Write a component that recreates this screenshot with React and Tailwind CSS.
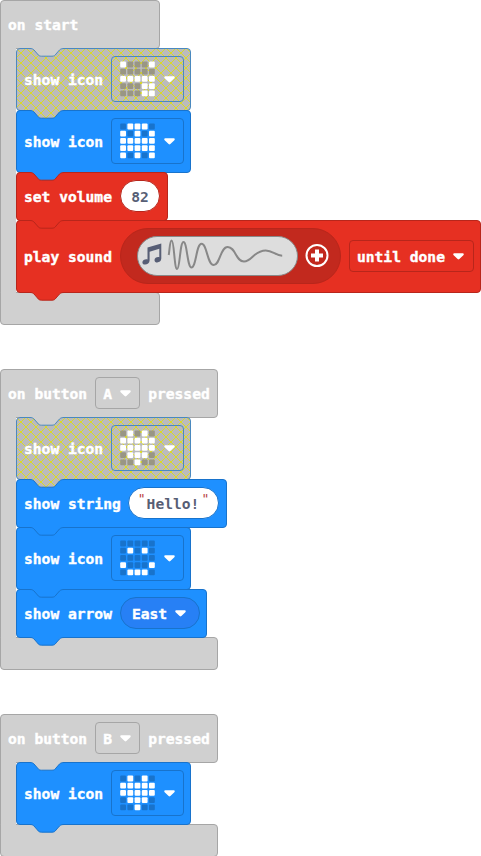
import React from 'react';

const HEART = ['01010', '11111', '11111', '01110', '00100'];
const GHOST = ['01110', '10101', '11111', '11111', '10101'];
const FACE = ['00000', '01010', '00000', '10001', '01110'];
const CHAIR = ['10001', '00000', '11111', '00011', '00011'];

const THEMES = {
  blue: { box: 'bg-[#1e90ff] border-[#1873cc]', field: 'border-[#1873cc]', fill: '#1e90ff', stroke: '#1873cc' },
  red: { box: 'bg-[#e63022] border-[#b8261b]', field: 'border-[#b8261b]', fill: '#e63022', stroke: '#b8261b' },
  disabled: { box: 'bg-[#bbbbbb] border-[#4a89bf]', field: 'border-[#4a89bf]', fill: '#bbbbbb', stroke: '#4a89bf' },
};

function Arrow() {
  return (
    <svg className="block shrink-0" width="11" height="7" viewBox="0 0 10 7" preserveAspectRatio="none">
      <path d="M0.2 1.1Q0.3 0.3 1.2 0.3H8.8Q9.7 0.3 9.8 1.1Q9.9 1.7 9.4 2.2L5.8 6.1Q5 6.8 4.2 6.1L0.6 2.2Q0.1 1.7 0.2 1.1Z" fill="#fff" />
    </svg>
  );
}

function Hatch({ id }) {
  return (
    <svg className="absolute -left-px -top-px h-[62px] w-[175px] rounded">
      <defs>
        <pattern id={id} patternUnits="userSpaceOnUse" width="10" height="10">
          <path d="M0 0L10 10M10 0L0 10" stroke="#d9d928" strokeWidth="1" />
        </pattern>
      </defs>
      <rect x="1" y="1" width="173" height="61" rx="3" fill={`url(#${id})`} />
    </svg>
  );
}

/* Puzzle tab: hangs from the block above and covers the top edge of the one below. */
function Tab({ fill, stroke, hatch }) {
  const d = 'M12 0.5H14C16 0.5 17 1 18 2L21.5 6C22.5 7.5 23.5 8.2 25.5 8.2H36C38 8.2 39 7.5 40 6L43.5 2C44.5 1 46 0.5 48 0.5H50';
  return (
    <svg className="pointer-events-none absolute left-0 z-10 h-[10px] w-[60px]" viewBox="0 0 60 10">
      {hatch && (
        <defs>
          <pattern id={hatch} patternUnits="userSpaceOnUse" width="10" height="10" y="-2">
            <path d="M0 0L10 10M10 0L0 10" stroke="#d9d928" strokeWidth="1" />
          </pattern>
        </defs>
      )}
      <path d={d + 'V0H12Z'} fill={fill} />
      {hatch && <path d={d + 'V0H12Z'} fill={`url(#${hatch})`} />}
      <path d={d} fill="none" stroke={stroke} />
    </svg>
  );
}

function Leds({ rows, dim }) {
  return (
    <svg className="block shrink-0" width="36" height="36" viewBox="0 0 36 36">
      {rows.map((row, y) =>
        [...row].map((c, x) => (
          <rect key={`${x}-${y}`} x={x * 7.2 + 0.2} y={y * 7.2 + 0.6} width="5.8" height="5.8" rx="1" fill={c === '1' ? '#fff' : dim ? '#999684' : '#1873cc'} />
        ))
      )}
    </svg>
  );
}

function Label({ children }) {
  return <span className="pt-0.5 leading-4 whitespace-pre [-webkit-text-stroke:0.4px_currentColor]">{children}</span>;
}

function PlainLabel({ children }) {
  return <span className="pt-0.5 leading-4 whitespace-pre">{children}</span>;
}

function Block({ theme, size, first, tabStroke, id, children }) {
  const t = THEMES[theme];
  return (
    <div className={`relative flex items-center gap-2 rounded border pb-px pl-[7px] ${t.box} ${size} -mb-px`}>
      {theme === 'disabled' && <Hatch id={`${id}-hatch`} />}
      {first && (
        <div className="absolute -left-px -top-px">
          <Tab fill="#d0d0d0" stroke={t.stroke} />
        </div>
      )}
      <div className="relative flex items-center gap-2">{children}</div>
      <div className="absolute -bottom-px -left-px h-px">
        <Tab fill={t.fill} stroke={tabStroke || t.stroke} hatch={theme === 'disabled' ? `${id}-tab` : null} />
      </div>
    </div>
  );
}

function IconBlock({ rows, theme = 'blue', ...rest }) {
  return (
    <Block theme={theme} size="h-[63px] w-[175px]" {...rest}>
      <Label>show icon</Label>
      <div className={`flex h-[46px] w-[73px] items-center gap-2 rounded border pl-2 ${THEMES[theme].field}`}>
        <Leds rows={rows} dim={theme === 'disabled'} />
        <Arrow />
      </div>
    </Block>
  );
}

function Hat({ header, width, children }) {
  return (
    <div className={`flex flex-col ${width}`}>
      <div className="flex h-[49px] items-center gap-2 rounded rounded-bl-none border border-[#a6a6a6] bg-[#d0d0d0] pb-px pl-[7px]">{header}</div>
      <div className="flex">
        <div className="relative -mb-px -mt-px w-4 shrink-0 border-l border-[#a6a6a6] bg-[#d0d0d0]" />
        <div className="relative z-10 -mt-px flex flex-col items-start">{children}</div>
      </div>
      <div className="relative h-[33px] rounded rounded-tl-none border border-[#a6a6a6] bg-[#d0d0d0]">
        <div className="-mt-px h-px w-[15px] bg-[#d0d0d0]" />
      </div>
    </div>
  );
}

function ButtonHeader({ name }) {
  return (
    <>
      <Label>on button</Label>
      <div className="flex h-8 w-[45px] shrink-0 items-center gap-2 rounded border border-[#a6a6a6] pl-[7px]">
        <Label>{name}</Label>
        <Arrow />
      </div>
      <Label>pressed</Label>
    </>
  );
}

function SoundWave() {
  return (
    <svg className="block shrink-0" width="158" height="40" viewBox="1.3 1 158 40">
      <g transform="translate(-0.4 0.4)">
        <path d="M11.2 12.2L25 8.2V23.2C25 27.6 18.4 28.4 18.2 24.8C18.1 22.5 20.8 21.3 23 21.8V13.4L13.3 16.4V25.2C13.3 29.6 6.3 30.6 6.1 27C6 24.7 8.9 23.5 11.2 24Z" fill="#575e75" />
      </g>
      <path d="M32 20C33 15 33 5.5 35 5.5C37.5 5.5 37.5 34 40.4 34C43.2 34 43.2 7 46.8 7C50.5 7 50.5 32.5 54.8 32.5C59.5 32.5 59.5 8.8 64.8 8.8C70.5 8.8 70.5 30 77 30C83.5 30 83.5 12 91 12C99 12 99 26.5 107.3 26.5C115.5 26.5 117 15.5 129 15.5C136 15.5 139 20.5 145.5 20.7" fill="none" stroke="#888" strokeWidth="2" />
    </svg>
  );
}

export default function App() {
  return (
    <div className="flex h-[856px] w-[481px] flex-col overflow-hidden bg-white font-['DejaVu_Sans_Mono',monospace] text-[14.62px] font-bold text-white">
      <Hat width="w-[160px]" header={<Label>on start</Label>}>
        <IconBlock id="chair" rows={CHAIR} theme="disabled" first tabStroke="#1873cc" />
        <IconBlock id="ghost" rows={GHOST} tabStroke="#b8261b" />
        <Block theme="red" size="h-[49px] w-[152px]">
          <Label>set volume</Label>
          <div className="flex h-8 w-10 items-center justify-center rounded-full border border-[#b8261b] bg-white text-[#575e75]">
            <PlainLabel>82</PlainLabel>
          </div>
        </Block>
        <Block theme="red" size="h-[73px] w-[465px]">
          <Label>play sound</Label>
          <div className="flex h-14 w-[221px] shrink-0 items-center gap-[7px] rounded-full border border-[#b8261b] bg-[#c2291e] pl-4">
            <div className="flex h-10 w-[161px] items-center rounded-full border border-[#888] bg-[#ddd]">
              <SoundWave />
            </div>
            <svg className="block" width="24" height="24" viewBox="0 0.5 24 24">
              <circle cx="12" cy="12" r="10.5" fill="none" stroke="#fff" strokeWidth="2" />
              <path d="M12 6V18M6 12H18" stroke="#fff" strokeWidth="4" />
            </svg>
          </div>
          <div className="flex h-8 w-[125px] shrink-0 items-center gap-2 rounded border border-[#b8261b] pl-[7px]">
            <Label>until done</Label>
            <Arrow />
          </div>
        </Block>
      </Hat>
      <div className="h-11 shrink-0" />
      <Hat width="w-[218px]" header={<ButtonHeader name="A" />}>
        <IconBlock id="heart" rows={HEART} theme="disabled" first tabStroke="#1873cc" />
        <Block theme="blue" size="h-[49px] w-[211px]">
          <Label>show string</Label>
          <div className="-ml-px flex h-8 w-[91px] items-center rounded-full border border-[#1873cc] bg-white pl-[9px] text-[#575e75]">
            <span className="mr-px pb-2 text-[13px] leading-4 font-normal text-[#b84040]">"</span>
            <PlainLabel>Hello!</PlainLabel>
            <span className="ml-[2px] pb-2 text-[13px] leading-4 font-normal text-[#b84040]">"</span>
          </div>
        </Block>
        <IconBlock id="face" rows={FACE} />
        <Block theme="blue" size="h-[49px] w-[191px]">
          <Label>show arrow</Label>
          <div className="flex h-8 w-20 items-center gap-2 rounded-full border border-[#1873cc] bg-[#2780f5] pl-[11px]">
            <Label>East</Label>
            <Arrow />
          </div>
        </Block>
      </Hat>
      <div className="h-11 shrink-0" />
      <Hat width="w-[218px]" header={<ButtonHeader name="B" />}>
        <IconBlock id="heart-b" rows={HEART} first />
      </Hat>
    </div>
  );
}
